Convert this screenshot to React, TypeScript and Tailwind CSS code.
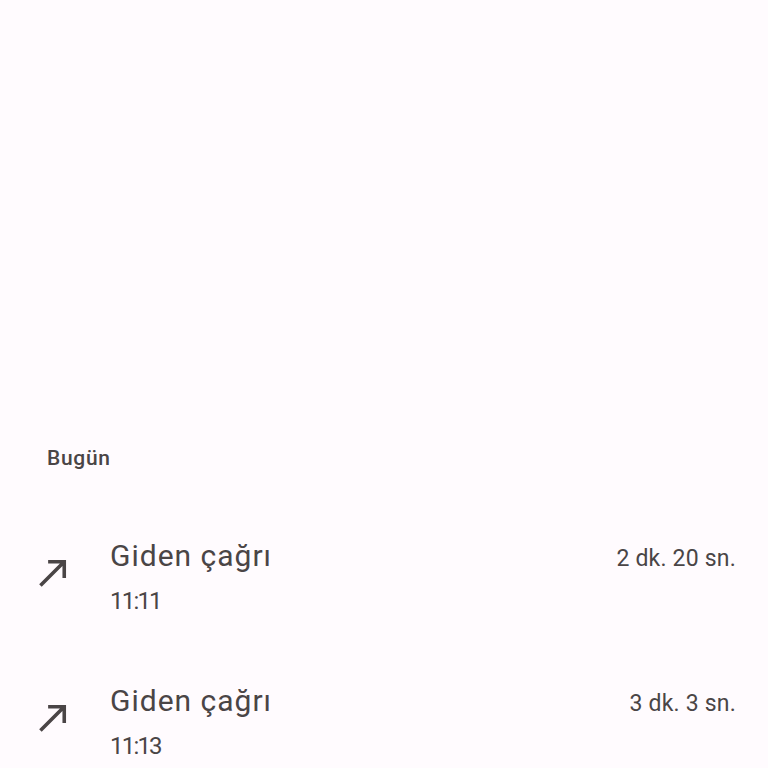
const calls = [
  { title: "Giden çağrı", time: "11:11", duration: "2 dk. 20 sn." },
  { title: "Giden çağrı", time: "11:13", duration: "3 dk. 3 sn." },
];

function OutgoingIcon() {
  return (
    <svg viewBox="0 0 24 24" className="h-[43px] w-[43px] shrink-0" fill="#4a4546">
      <path d="M9 5v2h6.59L4 18.59 5.41 20 17 8.41V15h2V5H9z" />
    </svg>
  );
}

export default function App() {
  return (
    <div
      className="h-screen overflow-hidden bg-[#fffbfe] pt-[446px] text-[#4a4546]"
      style={{ fontFamily: "Roboto, 'Noto Sans', sans-serif" }}
    >
      <div className="mb-[34px] pl-[47px] text-[21px] leading-6 font-medium tracking-[0.7px]">Bugün</div>
      <ul>
        {calls.map((c, i) => (
          <li key={i} className="flex py-[34px] pl-8 pr-8">
            <div className="mt-[13px]">
              <OutgoingIcon />
            </div>
            <div className="ml-[35px] flex-1">
              <div className="flex items-baseline justify-between">
                <span className="text-[30px] leading-9 tracking-[1px]">{c.title}</span>
                <span className="text-[23px] leading-7 tracking-[0.2px]">{c.duration}</span>
              </div>
              <div className="mt-[13px] text-[24px] leading-7 tracking-[-1.8px]">{c.time}</div>
            </div>
          </li>
        ))}
      </ul>
    </div>
  );
}
